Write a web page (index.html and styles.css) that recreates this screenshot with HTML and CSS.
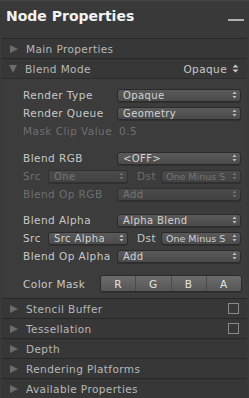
FILE: index.html
```html
<!DOCTYPE html>
<html>
<head>
<meta charset="utf-8">
<link rel="stylesheet" href="styles.css">
</head>
<body>
<div class="window">
  <div class="header">
    <div class="title">Node Properties</div>
    <div class="minimize"></div>
  </div>
  <div class="fold"><span class="tri right"></span><span class="fold-label">Main Properties</span></div>
  <div class="fold"><span class="tri down"></span><span class="fold-label">Blend Mode</span>
    <span class="fold-value">Opaque <svg class="updown big" width="7" height="9" viewBox="0 0 7 9"><path d="M0.5 3.5 L3.5 0.5 L6.5 3.5 Z M0.5 5.5 L3.5 8.5 L6.5 5.5 Z" fill="#c8c8c8"/></svg></span>
  </div>
  <div class="panel">
    <div class="row"><span class="label">Render Type</span><div class="dd wide"><span class="ddt">Opaque</span><svg class="updown" width="5" height="8" viewBox="0 0 5 8"><path d="M0.5 3 L2.5 0.5 L4.5 3 Z M0.5 5 L2.5 7.5 L4.5 5 Z" fill="#c0c0c0"/></svg></div></div>
    <div class="row"><span class="label">Render Queue</span><div class="dd wide"><span class="ddt">Geometry</span><svg class="updown" width="5" height="8" viewBox="0 0 5 8"><path d="M0.5 3 L2.5 0.5 L4.5 3 Z M0.5 5 L2.5 7.5 L4.5 5 Z" fill="#c0c0c0"/></svg></div></div>
    <div class="row"><span class="label dis">Mask Clip Value</span><span class="value dis">0.5</span></div>

    <div class="row group"><span class="label">Blend RGB</span><div class="dd wide"><span class="ddt">&lt;OFF&gt;</span><svg class="updown" width="5" height="8" viewBox="0 0 5 8"><path d="M0.5 3 L2.5 0.5 L4.5 3 Z M0.5 5 L2.5 7.5 L4.5 5 Z" fill="#c0c0c0"/></svg></div></div>
    <div class="row"><span class="label short dis">Src</span><div class="dd src off"><span class="ddt">One</span><svg class="updown" width="5" height="8" viewBox="0 0 5 8"><path d="M0.5 3 L2.5 0.5 L4.5 3 Z M0.5 5 L2.5 7.5 L4.5 5 Z" fill="#707070"/></svg></div><span class="label dst dis">Dst</span><div class="dd dstdd off"><span class="ddt tight">One Minus S</span><svg class="updown" width="5" height="8" viewBox="0 0 5 8"><path d="M0.5 3 L2.5 0.5 L4.5 3 Z M0.5 5 L2.5 7.5 L4.5 5 Z" fill="#707070"/></svg></div></div>
    <div class="row"><span class="label dis">Blend Op RGB</span><div class="dd wide off"><span class="ddt">Add</span><svg class="updown" width="5" height="8" viewBox="0 0 5 8"><path d="M0.5 3 L2.5 0.5 L4.5 3 Z M0.5 5 L2.5 7.5 L4.5 5 Z" fill="#707070"/></svg></div></div>

    <div class="row group2"><span class="label">Blend Alpha</span><div class="dd wide"><span class="ddt">Alpha Blend</span><svg class="updown" width="5" height="8" viewBox="0 0 5 8"><path d="M0.5 3 L2.5 0.5 L4.5 3 Z M0.5 5 L2.5 7.5 L4.5 5 Z" fill="#c0c0c0"/></svg></div></div>
    <div class="row"><span class="label short">Src</span><div class="dd src"><span class="ddt">Src Alpha</span><svg class="updown" width="5" height="8" viewBox="0 0 5 8"><path d="M0.5 3 L2.5 0.5 L4.5 3 Z M0.5 5 L2.5 7.5 L4.5 5 Z" fill="#c0c0c0"/></svg></div><span class="label dst">Dst</span><div class="dd dstdd"><span class="ddt tight">One Minus S</span><svg class="updown" width="5" height="8" viewBox="0 0 5 8"><path d="M0.5 3 L2.5 0.5 L4.5 3 Z M0.5 5 L2.5 7.5 L4.5 5 Z" fill="#c0c0c0"/></svg></div></div>
    <div class="row"><span class="label">Blend Op Alpha</span><div class="dd wide"><span class="ddt">Add</span><svg class="updown" width="5" height="8" viewBox="0 0 5 8"><path d="M0.5 3 L2.5 0.5 L4.5 3 Z M0.5 5 L2.5 7.5 L4.5 5 Z" fill="#c0c0c0"/></svg></div></div>

    <div class="row mask"><span class="label masklabel">Color Mask</span>
      <div class="btns"><span>R</span><span>G</span><span>B</span><span>A</span></div>
    </div>
  </div>
  <div class="fold"><span class="tri right"></span><span class="fold-label">Stencil Buffer</span><span class="check"></span></div>
  <div class="fold"><span class="tri right"></span><span class="fold-label">Tessellation</span><span class="check"></span></div>
  <div class="fold"><span class="tri right"></span><span class="fold-label">Depth</span></div>
  <div class="fold"><span class="tri right"></span><span class="fold-label">Rendering Platforms</span></div>
  <div class="fold"><span class="tri right"></span><span class="fold-label">Available Properties</span></div>
</div>
</body>
</html>
```

FILE: styles.css
```css
html, body {
  margin: 0;
  padding: 0;
  background: #2e2e2e;
  width: 249px;
  height: 398px;
  overflow: hidden;
  font-family: "DejaVu Sans", Verdana, sans-serif;
}

.window {
  background: #3a3a3a;
  height: 398px;
  display: flex;
  flex-direction: column;
  border-top: 1px solid #444;
}

.header {
  height: 37px;
  display: flex;
  align-items: flex-start;
  justify-content: space-between;
  box-sizing: border-box;
  padding: 7px 5px 0 6px;
  background: #393939;
}

.title {
  color: #f2f2f2;
  font-weight: bold;
  font-size: 14px;
  letter-spacing: 0;
}

.minimize {
  width: 16px;
  height: 2px;
  background: #b0b0b0;
  margin-top: 11px;
}

.fold {
  height: 20px;
  box-sizing: border-box;
  margin: 0 2px;
  border-top: 1px solid #272727;
  background: #373737;
  display: flex;
  align-items: center;
  padding: 0 8px 0 7px;
  color: #b8b8b8;
  font-size: 10.5px;
  letter-spacing: 0.4px;
}

.tri {
  width: 0;
  height: 0;
  margin-right: 8px;
}

.tri.right {
  border-top: 4.5px solid transparent;
  border-bottom: 4.5px solid transparent;
  border-left: 8px solid #6c6c6c;
  margin-left: 1px;
}

.tri.down {
  border-left: 4.5px solid transparent;
  border-right: 4.5px solid transparent;
  border-top: 8px solid #6c6c6c;
  margin-left: 0;
  margin-right: 8px;
}

.fold-label {
  flex: 1;
  white-space: nowrap;
}

.fold-value {
  display: flex;
  align-items: center;
  gap: 5px;
  color: #c8c8c8;
}

.check {
  width: 9px;
  height: 9px;
  border: 1px solid #8a8a8a;
}

.panel {
  margin: 0 3px 0 2px;
  background: #3c3c3c;
  border-top: 1px solid #2c2c2c;
  padding: 7px 4px 5px 21px;
  display: flex;
  flex-direction: column;
  font-size: 10.5px;
  letter-spacing: 0.45px;
  color: #c8c8c8;
}

.row {
  height: 18px;
  display: flex;
  align-items: center;
}

.row.group { margin-top: 9px; }
.row.group2 { margin-top: 8px; }
.row.mask { margin-top: 9px; height: 19px; }

.label {
  width: 94px;
  flex: none;
  white-space: nowrap;
}

.label.short { width: 25px; }
.label.dst { width: 24px; margin-left: 9px; }
.masklabel { width: 77px; }

.dis { color: #6f6f6f; }

.value { margin-left: 2px; }

.dd {
  height: 13px;
  box-sizing: border-box;
  border: 1px solid #2b2b2b;
  border-radius: 3px;
  background: linear-gradient(#5a5a5a, #4b4b4b);
  box-shadow: 0 1px 0 #303030;
  display: flex;
  align-items: center;
  gap: 1px;
  padding: 0 3px 0 5px;
  color: #d2d2d2;
  font-size: 10px;
  letter-spacing: 0.4px;
  flex: none;
}

.ddt {
  white-space: nowrap;
  flex: none;
}

.ddt.tight {
  letter-spacing: 0;
  font-size: 9.5px;
}

.updown {
  flex: none;
  margin-left: auto;
}

.dd.wide { width: 124px; }
.dd.src { width: 80px; }
.dd.dstdd { width: 80px; padding-left: 4px; }

.dd.off {
  background: linear-gradient(#4a4a4a, #434343);
  color: #767676;
  border-color: #303030;
}

.btns {
  width: 142px;
  height: 17px;
  display: flex;
  border: 1px solid #2b2b2b;
  border-radius: 3px;
  box-sizing: border-box;
  overflow: hidden;
  box-shadow: 0 1px 0 #303030;
}

.btns span {
  flex: 1;
  display: flex;
  align-items: center;
  justify-content: center;
  background: linear-gradient(#6c6c6c, #565656);
  color: #e4e4e4;
  font-size: 10.5px;
  border-left: 1px solid #4a4a4a;
}

.btns span:first-child { border-left: none; }
```
